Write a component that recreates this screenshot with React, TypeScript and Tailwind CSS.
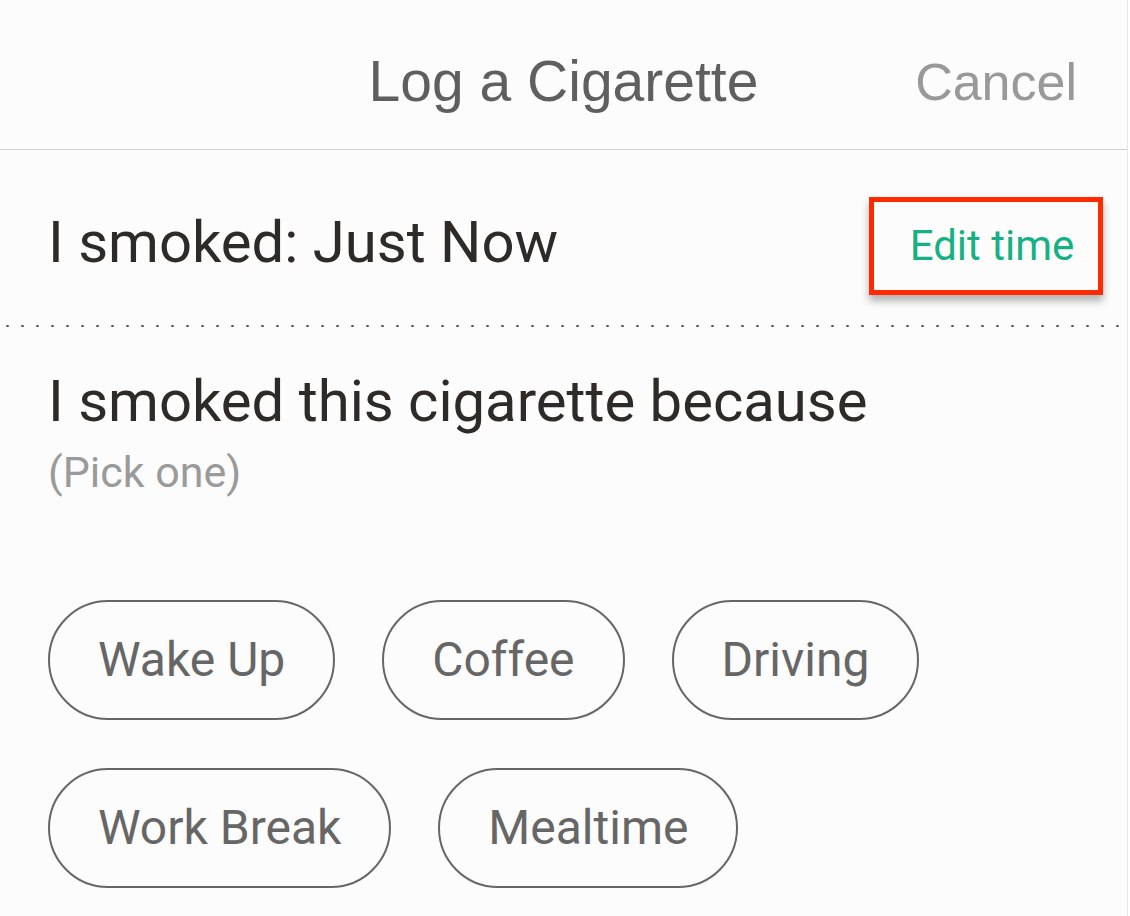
import React, { useState } from 'react';

const reasons = [['Wake Up', 'Coffee', 'Driving'], ['Work Break', 'Mealtime']];

export default function App() {
  const [picked, setPicked] = useState<string>('');

  return (
    <div className="min-h-[916px] w-[1130px] bg-white font-['Roboto','Liberation_Sans',sans-serif]">
      <div className="min-h-[916px] w-[1128px] border-r border-[#e6e6e6] bg-[#fcfcfc]">
        {/* header */}
        <div className="grid h-[150px] grid-cols-[1fr_auto_1fr] items-center border-b border-[#cfcfcf] pt-[14px]">
          <div />
          <h1 className="text-[57px] leading-none text-[#5f5f5f] font-['Liberation_Sans','Roboto',sans-serif]">Log a Cigarette</h1>
          <div className="flex justify-end pr-[50px]">
            <button className="text-[52px] leading-none text-[#999] font-['Liberation_Sans','Roboto',sans-serif]">Cancel</button>
          </div>
        </div>

        {/* time row */}
        <div className="flex h-[175px] items-center justify-between pl-[48px] pr-[24px] pt-[8px]">
          <div className="text-[58px] leading-none text-[#2e2a27]">I smoked: Just Now</div>
          <button className="mt-[8px] flex h-[98px] w-[234px] items-center justify-center border-[5px] border-[#ff2a00] pl-[12px] text-[42px] leading-none text-[#17b084] shadow-[0_6px_8px_rgba(0,0,0,0.3)]">
            Edit time
          </button>
        </div>

        {/* dotted separator */}
        <div className="mr-[2px] h-[2px] bg-[radial-gradient(circle,#555_1px,transparent_1.4px)] bg-[length:15px_2px]" />

        {/* reason */}
        <div className="pl-[48px] pt-[45px]">
          <div className="text-[58px] leading-none text-[#2e2a27]">I smoked this cigarette because</div>
          <div className="mt-[21px] text-[43px] leading-none text-[#9a9a9a]">(Pick one)</div>
        </div>

        <div className="flex flex-col gap-[48px] pl-[48px] pt-[106px]">
          {reasons.map((row, i) => (
            <div key={i} className="flex gap-[47px]">
              {row.map((r) => (
                <button
                  key={r}
                  onClick={() => setPicked(r)}
                  className={`flex h-[120px] items-center rounded-full border-2 border-[#666] px-[48px] text-[48px] leading-none ${
                    picked === r ? 'bg-[#17b084] text-white' : 'text-[#666]'
                  }`}
                >
                  {r}
                </button>
              ))}
            </div>
          ))}
        </div>
      </div>
    </div>
  );
}
